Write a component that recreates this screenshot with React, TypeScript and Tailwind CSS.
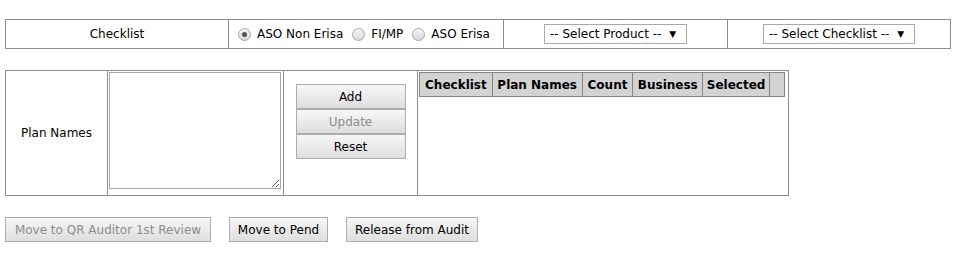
import React from "react";

// Audit checklist screen: product/checklist pickers, plan names entry, grid header, action buttons.
const font = { fontFamily: '"DejaVu Sans", Verdana, sans-serif' };

const btn =
  "flex items-center justify-center h-[25px] border border-[#adadad] bg-gradient-to-b from-[#f7f7f7] to-[#dedede] text-[12px] leading-none";

function Radio({ checked, label }: { checked?: boolean; label: string }) {
  return (
    <label className="flex items-center shrink-0 whitespace-nowrap mr-[9px]">
      <span className="relative flex items-center justify-center shrink-0 w-[13px] h-[13px] rounded-full border border-[#a8a8a8] bg-gradient-to-b from-[#f4f4f4] to-[#d9d9d9] mr-[6px]">
        {checked && <span className="w-[5px] h-[5px] rounded-full bg-[#555]" />}
      </span>
      <span>{label}</span>
    </label>
  );
}

function FakeSelect({ label, w }: { label: string; w: string }) {
  return (
    <div className={`${w} h-[20px] border border-[#a9a9a9] bg-white flex items-center pl-[5px] text-[12px] whitespace-nowrap`}>
      <span>{label}</span>
      <span className="ml-[8px] text-[9px] leading-none">▼</span>
    </div>
  );
}

const cols: [string, string][] = [
  ["Checklist", "w-[72px]"],
  ["Plan Names", "w-[90px]"],
  ["Count", "w-[51px]"],
  ["Business", "w-[70px]"],
  ["Selected", "w-[67px]"],
  ["", "w-[15px]"],
];

export default function App() {
  return (
    <div className="min-h-screen bg-white text-black text-[12px] pt-[19px] pl-[5px]" style={font}>
      {/* top selector strip */}
      <div className="w-[946px] h-[30px] border border-[#8c8c8c] flex">
        <div className="w-[222px] flex items-center justify-center">Checklist</div>
        <div className="w-[275px] border-l border-[#8c8c8c] flex items-center pl-[9px] overflow-hidden">
          <Radio checked label="ASO Non Erisa" />
          <Radio label="FI/MP" />
          <Radio label="ASO Erisa" />
        </div>
        <div className="w-[224px] border-l border-[#8c8c8c] flex items-center justify-center">
          <FakeSelect label="-- Select Product --" w="w-[143px]" />
        </div>
        <div className="flex-1 border-l border-[#8c8c8c] flex items-center justify-center">
          <FakeSelect label="-- Select Checklist --" w="w-[152px]" />
        </div>
      </div>

      {/* plan names block */}
      <div className="mt-[21px] w-[784px] h-[126px] border border-[#8c8c8c] flex">
        <div className="w-[101px] flex items-center justify-center">Plan Names</div>
        <div className="w-[176px] border-l border-[#8c8c8c] pt-[1px] pl-[1px]">
          <textarea className="block w-[172px] h-[117px] border border-[#a9a9a9] resize" />
        </div>
        <div className="w-[134px] border-l border-[#8c8c8c] flex flex-col items-center pt-[13px]">
          <button className={`${btn} w-[110px]`}>Add</button>
          <button className={`${btn} w-[110px] text-[#8d8d8d]`} disabled>Update</button>
          <button className={`${btn} w-[110px]`}>Reset</button>
        </div>
        <div className="flex-1 border-l border-[#8c8c8c] pt-[1px] pl-[1px]">
          <div className="flex w-[366px] h-[25px] border border-[#858585] bg-[#d3d3d3] font-bold">
            {cols.map(([t, w], i) => (
              <div key={i} className={`${w} ${i ? "border-l border-[#858585]" : ""} flex items-center justify-center whitespace-nowrap`}>
                {t}
              </div>
            ))}
          </div>
        </div>
      </div>

      {/* actions */}
      <div className="mt-[21px] flex gap-[18px]">
        <button className={`${btn} w-[206px] text-[#8d8d8d]`} disabled>Move to QR Auditor 1st Review</button>
        <button className={`${btn} w-[99px]`}>Move to Pend</button>
        <button className={`${btn} w-[132px]`}>Release from Audit</button>
      </div>
    </div>
  );
}
